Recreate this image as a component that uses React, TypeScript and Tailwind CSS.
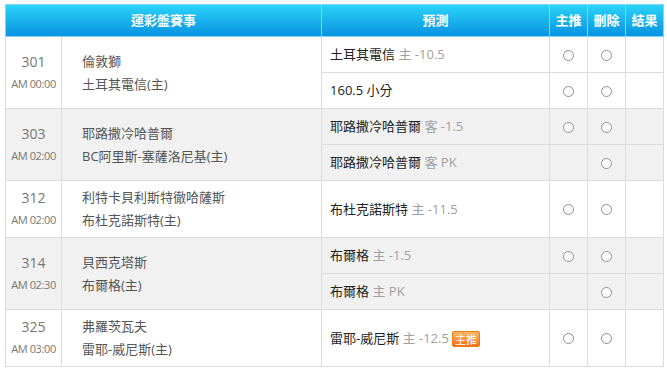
import React from 'react';

type Pick = {
  team: string;
  side?: string;
  line: string;
  canPush?: boolean;
  badge?: boolean;
};

type Game = {
  no: string;
  time: string;
  away: string;
  home: string;
  picks: Pick[];
};

const games: Game[] = [
  {
    no: '301',
    time: 'AM 00:00',
    away: '倫敦獅',
    home: '土耳其電信(主)',
    picks: [
      { team: '土耳其電信', side: '主', line: '-10.5', canPush: true },
      { team: '160.5 小分', line: '', canPush: true },
    ],
  },
  {
    no: '303',
    time: 'AM 02:00',
    away: '耶路撒冷哈普爾',
    home: 'BC阿里斯-塞薩洛尼基(主)',
    picks: [
      { team: '耶路撒冷哈普爾', side: '客', line: '-1.5', canPush: true },
      { team: '耶路撒冷哈普爾', side: '客', line: 'PK', canPush: false },
    ],
  },
  {
    no: '312',
    time: 'AM 02:00',
    away: '利特卡貝利斯特徹哈薩斯',
    home: '布杜克諾斯特(主)',
    picks: [{ team: '布杜克諾斯特', side: '主', line: '-11.5', canPush: true }],
  },
  {
    no: '314',
    time: 'AM 02:30',
    away: '貝西克塔斯',
    home: '布爾格(主)',
    picks: [
      { team: '布爾格', side: '主', line: '-1.5', canPush: true },
      { team: '布爾格', side: '主', line: 'PK', canPush: false },
    ],
  },
  {
    no: '325',
    time: 'AM 03:00',
    away: '弗羅茨瓦夫',
    home: '雷耶-威尼斯(主)',
    picks: [
      { team: '雷耶-威尼斯', side: '主', line: '-12.5', canPush: true, badge: true },
    ],
  },
];

const Circle = () => (
  <span className="inline-block h-[11px] w-[11px] rounded-full border border-[#909090] bg-white align-middle" />
);

// orange "主推" tag shown next to the recommended pick
const Badge = () => (
  <span className="ml-[3px] inline-flex h-[16px] items-center rounded-[2px] border border-[#ec7d16] bg-gradient-to-b from-[#ffb866] to-[#f0700f] px-[2px] align-middle text-[11px] leading-none text-white">
    主推
  </span>
);

const PickText = ({ pick }: { pick: Pick }) => (
  <span className="whitespace-nowrap">
    <span className="text-[#222]">{pick.team}</span>
    {pick.side && (
      <span className="text-[#a0a0a0]">
        {' '}
        {pick.side} {pick.line}
      </span>
    )}
    {pick.badge && <Badge />}
  </span>
);

export default function App() {
  const cell = 'border border-[#dcdcdc]';
  return (
    <div
      className="min-h-[375px] bg-white pl-[5px] pt-[4px]"
      style={{ fontFamily: '"Open Sans", "Noto Sans CJK TC", sans-serif' }}
    >
      <table className="w-[658px] table-fixed border-collapse text-[13px]">
        <colgroup>
          <col className="w-[56px]" />
          <col className="w-[260px]" />
          <col className="w-[228px]" />
          <col className="w-[38px]" />
          <col className="w-[38px]" />
          <col className="w-[38px]" />
        </colgroup>
        <thead>
          <tr className="h-[32px] bg-gradient-to-b from-[#2bd3f7] to-[#0990e0] text-[13px] font-bold text-white">
            <th colSpan={2} className="border border-[#7fd9f5]">
              運彩盤賽事
            </th>
            <th className="border border-[#7fd9f5]">預測</th>
            <th className="border border-[#7fd9f5]">主推</th>
            <th className="border border-[#7fd9f5]">刪除</th>
            <th className="border border-[#7fd9f5]">結果</th>
          </tr>
        </thead>
        <tbody>
          {games.map((g, gi) => {
            const bg = gi % 2 === 1 ? 'bg-[#f1f1f1]' : 'bg-white';
            const rowH = g.picks.length > 1 ? 'h-[36px]' : 'h-[57px]';
            return g.picks.map((p, pi) => (
              <tr key={`${g.no}-${pi}`} className={`${bg} ${rowH}`}>
                {pi === 0 && (
                  <>
                    <td rowSpan={g.picks.length} className={`${cell} text-center`}>
                      <div className="text-[14px] leading-[22px] text-[#777]">{g.no}</div>
                      <div className="text-[11px] leading-[22px] tracking-[-0.4px] text-[#777]">
                        {g.time}
                      </div>
                    </td>
                    <td rowSpan={g.picks.length} className={`${cell} pl-[20px] text-[#555]`}>
                      <div className="leading-[23px]">{g.away}</div>
                      <div className="leading-[23px]">{g.home}</div>
                    </td>
                  </>
                )}
                <td className={`${cell} pl-[8px] pt-[1px]`}>
                  <PickText pick={p} />
                </td>
                <td className={`${cell} text-center`}>{p.canPush && <Circle />}</td>
                <td className={`${cell} text-center`}>
                  <Circle />
                </td>
                <td className={cell} />
              </tr>
            ));
          })}
        </tbody>
      </table>
    </div>
  );
}
